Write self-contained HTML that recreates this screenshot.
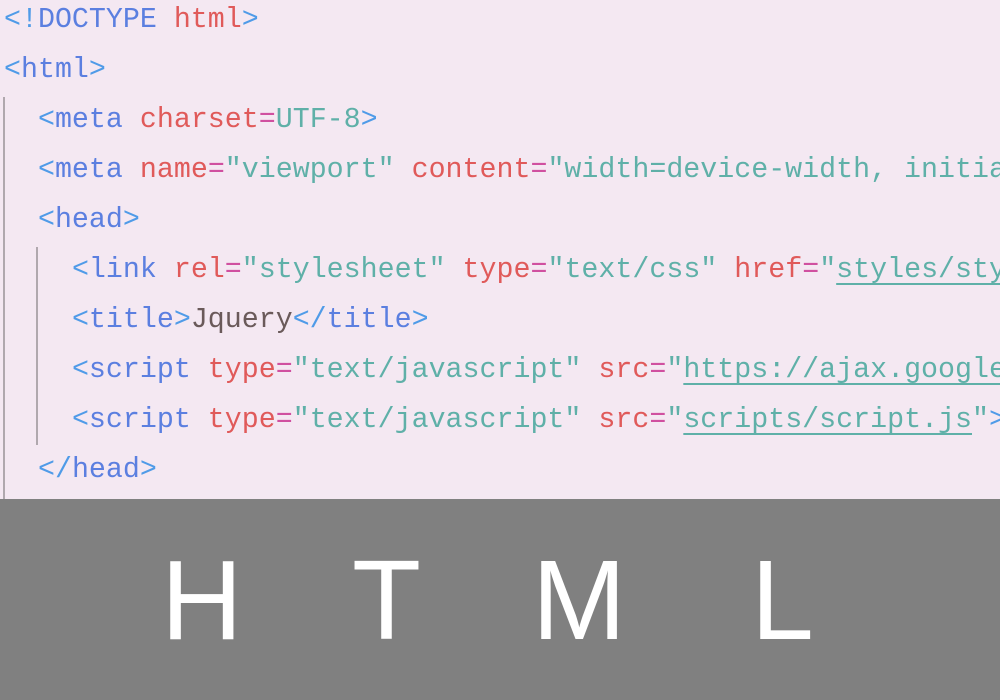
<!DOCTYPE html>
<html><head><meta charset="utf-8"><style>
body{margin:0;width:1000px;height:700px;overflow:hidden;background:#f4e8f2;position:relative}
.code{position:absolute;left:4px;top:-5px;width:996px;height:510px;overflow:hidden;font-family:"Liberation Mono","DejaVu Sans Mono",monospace;font-size:28.3px;line-height:50px;white-space:pre;color:#6a5a5a}
.b{color:#4f9be8}.t{color:#5b7fe0}.a{color:#e05a5a}.e{color:#d050a0}.s{color:#5fb0a8}.u{text-decoration:underline;text-underline-offset:6px}
.g{position:absolute;width:2px;background:#b0a8ae}
.bar{position:absolute;left:0;top:499px;width:1000px;height:201px;background:#808080}
.L{position:absolute;top:544px;font-family:"Liberation Sans",sans-serif;font-size:113px;color:#fff;line-height:1}
</style></head><body>
<div class="g" style="left:3px;top:97px;height:402px"></div>
<div class="g" style="left:36px;top:247px;height:198px"></div>
<div class="code"><span class="b">&lt;!</span><span class="t">DOCTYPE</span> <span class="a">html</span><span class="b">&gt;</span>
<span class="b">&lt;</span><span class="t">html</span><span class="b">&gt;</span>
  <span class="b">&lt;</span><span class="t">meta</span> <span class="a">charset</span><span class="e">=</span><span class="s">UTF-8</span><span class="b">&gt;</span>
  <span class="b">&lt;</span><span class="t">meta</span> <span class="a">name</span><span class="e">=</span><span class="s">"viewport"</span> <span class="a">content</span><span class="e">=</span><span class="s">"width=device-width, initial-scale=1"</span>
  <span class="b">&lt;</span><span class="t">head</span><span class="b">&gt;</span>
    <span class="b">&lt;</span><span class="t">link</span> <span class="a">rel</span><span class="e">=</span><span class="s">"stylesheet"</span> <span class="a">type</span><span class="e">=</span><span class="s">"text/css"</span> <span class="a">href</span><span class="e">=</span><span class="s">"<span class="u">styles/style.css</span>"</span>
    <span class="b">&lt;</span><span class="t">title</span><span class="b">&gt;</span>Jquery<span class="b">&lt;/</span><span class="t">title</span><span class="b">&gt;</span>
    <span class="b">&lt;</span><span class="t">script</span> <span class="a">type</span><span class="e">=</span><span class="s">"text/javascript"</span> <span class="a">src</span><span class="e">=</span><span class="s">"<span class="u">https://ajax.googleapis.com</span>"</span>
    <span class="b">&lt;</span><span class="t">script</span> <span class="a">type</span><span class="e">=</span><span class="s">"text/javascript"</span> <span class="a">src</span><span class="e">=</span><span class="s">"<span class="u">scripts/script.js</span>"</span><span class="b">&gt;</span>
  <span class="b">&lt;/</span><span class="t">head</span><span class="b">&gt;</span></div>
<div class="bar"></div>
<div class="L" style="left:161px">H</div>
<div class="L" style="left:352px">T</div>
<div class="L" style="left:532px">M</div>
<div class="L" style="left:751px">L</div>
</body></html>
